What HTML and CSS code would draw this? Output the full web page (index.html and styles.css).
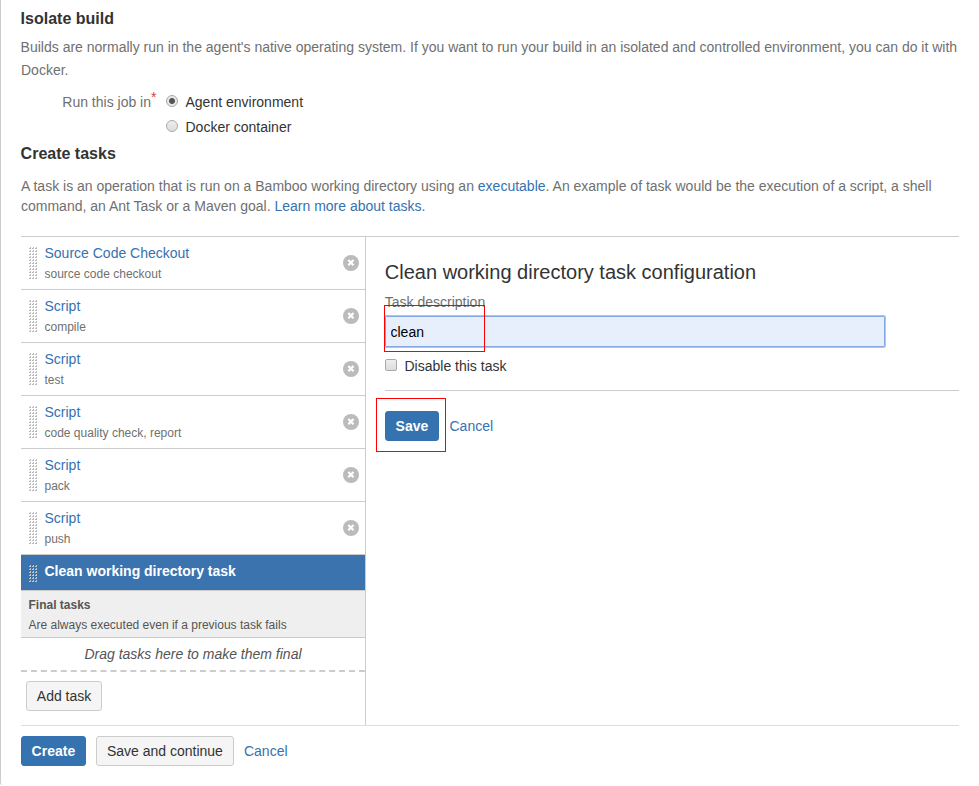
FILE: index.html
```html
<!DOCTYPE html>
<html lang="en">
<head>
<meta charset="utf-8">
<title>Create tasks</title>
<link rel="stylesheet" href="styles.css">
</head>
<body>
<svg class="defs" width="0" height="0" aria-hidden="true">
  <defs>
    <pattern id="dots" width="3" height="3" patternUnits="userSpaceOnUse">
      <path d="M1 0h1v1h-1zM0 1h2v1h-2z" fill="#bcbcbc"/>
    </pattern>
    <pattern id="dots-light" width="3" height="3" patternUnits="userSpaceOnUse">
      <path d="M1 0h1v1h-1zM0 1h2v1h-2z" fill="#c4c4c4"/>
    </pattern>
    <symbol id="remove" viewBox="0 0 16 16">
      <circle cx="8" cy="8" r="8" fill="#bbb"/>
      <path d="M5.3 5l5.2 5.2M10.5 5l-5.2 5.2" stroke="#fff" stroke-width="2.2"/>
    </symbol>
  </defs>
</svg>
<main class="page">
  <section class="isolate">
    <h3>Isolate build</h3>
    <p class="intro">Builds are normally run in the agent's native operating system. If you want to run your build in an isolated and controlled environment, you can do it with Docker.</p>
    <div class="field">
      <div class="field-label">Run this job in<span class="required">*</span></div>
      <div class="options">
        <label class="option"><span class="radio checked"></span>Agent environment</label>
        <label class="option"><span class="radio"></span>Docker container</label>
      </div>
    </div>
  </section>
  <section class="create">
    <h3>Create tasks</h3>
    <p class="intro-tasks">A task is an operation that is run on a Bamboo working directory using an <a>executable</a>. An example of task would be the execution of a script, a shell command, an Ant Task or a Maven goal. <a>Learn more about tasks.</a></p>
  </section>
  <div class="panel">
    <div class="tasks">
      <div class="task"><svg class="grip" width="8" height="32"><rect width="8" height="32" fill="url(#dots)"/></svg><div class="task-text"><a>Source Code Checkout</a><small>source code checkout</small></div><svg class="remove"><use href="#remove"/></svg></div>
      <div class="task"><svg class="grip" width="8" height="32"><rect width="8" height="32" fill="url(#dots)"/></svg><div class="task-text"><a>Script</a><small>compile</small></div><svg class="remove"><use href="#remove"/></svg></div>
      <div class="task"><svg class="grip" width="8" height="32"><rect width="8" height="32" fill="url(#dots)"/></svg><div class="task-text"><a>Script</a><small>test</small></div><svg class="remove"><use href="#remove"/></svg></div>
      <div class="task"><svg class="grip" width="8" height="32"><rect width="8" height="32" fill="url(#dots)"/></svg><div class="task-text"><a>Script</a><small>code quality check, report</small></div><svg class="remove"><use href="#remove"/></svg></div>
      <div class="task"><svg class="grip" width="8" height="32"><rect width="8" height="32" fill="url(#dots)"/></svg><div class="task-text"><a>Script</a><small>pack</small></div><svg class="remove"><use href="#remove"/></svg></div>
      <div class="task"><svg class="grip" width="8" height="32"><rect width="8" height="32" fill="url(#dots)"/></svg><div class="task-text"><a>Script</a><small>push</small></div><svg class="remove"><use href="#remove"/></svg></div>
      <div class="task active"><svg class="grip" width="8" height="17"><rect width="8" height="17" fill="url(#dots-light)"/></svg><div class="task-text">Clean working directory task</div></div>
      <div class="final"><strong>Final tasks</strong><span>Are always executed even if a previous task fails</span></div>
      <div class="drop">Drag tasks here to make them final</div>
      <svg class="dashes" width="344" height="2"><path d="M0 1H344" stroke="#ccc" stroke-width="2" stroke-dasharray="6 3.94"/></svg>
      <button class="button add">Add task</button>
    </div>
    <div class="config">
      <h2>Clean working directory task configuration</h2>
      <div class="described">
        <label class="caption" for="description">Task description</label>
        <input id="description" class="text" type="text" value="clean">
        <span class="mark mark-input"></span>
      </div>
      <label class="disable"><span class="checkbox"></span>Disable this task</label>
      <div class="config-actions">
        <span class="save"><button class="button primary">Save</button><span class="mark mark-save"></span></span>
        <a>Cancel</a>
      </div>
    </div>
  </div>
  <div class="actions">
    <button class="button primary">Create</button>
    <button class="button">Save and continue</button>
    <a>Cancel</a>
  </div>
</main>
</body>
</html>
```
FILE: styles.css
```css
* { box-sizing: border-box; }
body {
  margin: 0;
  background: #fff;
  color: #333;
  font: 14px/20px "Liberation Sans", Arial, sans-serif;
}
a { color: #3572b0; }
h2, h3, p { margin: 0; }
.defs { display: block; height: 0; }
.page {
  height: 786px;
  padding: 9px 20px 0;
  border-left: 1px solid #ccc;
  border-bottom: 1px solid transparent;
  border-bottom-left-radius: 4px;
  overflow: hidden;
}
h3 { font-size: 16px; line-height: 20px; text-indent: -0.4px; }
.intro { margin: 7px -2px 0 0; line-height: 23px; color: #707070; text-indent: -0.4px; }
.field { display: flex; margin-top: 10px; }
.field-label { width: 135px; text-align: right; color: #707070; white-space: nowrap; }
.required {
  display: inline-block;
  width: 5px;
  color: #d04437;
  line-height: 10px;
  transform: translateY(-5px);
}
.options { margin-left: 10px; }
.option { display: flex; height: 25px; }
.radio {
  width: 12px;
  height: 12px;
  margin: 3px 7.5px 0 0;
  border: 1px solid #a9a9a9;
  border-radius: 50%;
  background: linear-gradient(#eee, #dcdcdc);
}
.radio.checked { background: radial-gradient(circle, #555 0 2.5px, #e8e8e8 3.5px); }
.create { margin-top: 2px; }
.intro-tasks { margin-top: 12px; color: #707070; }
.panel {
  display: flex;
  width: 938px;
  height: 490px;
  margin-top: 20px;
  border-top: 1px solid #ccc;
  border-bottom: 1px solid #ddd;
}
.tasks { width: 345px; border-right: 1px solid #ccc; }
.task {
  display: flex;
  height: 53px;
  padding: 6px 6px 0 8px;
  border-bottom: 1px solid #ccc;
}
.grip { display: block; flex: none; margin-top: 4px; }
.task-text { flex: 1; margin-left: 7.5px; }
.task-text a, .task-text small { display: block; }
.task-text small { font-size: 12px; line-height: 20px; color: #707070; }
.remove { width: 16px; height: 16px; margin-top: 12px; }
.task-text small { padding-top: 1px; }
.task.active {
  height: 36px;
  background: #3b73af;
  color: #fff;
  font-weight: bold;
}
.final {
  height: 47px;
  padding: 4px 7.5px 0;
  border-bottom: 1px solid #ccc;
  background: #efefef;
  color: #555;
  font-size: 12px;
}
.final strong, .final span { display: block; }
.drop { height: 32px; padding-top: 6px; text-align: center; font-style: italic; color: #555; }
.dashes { display: block; }
.button {
  height: 30px;
  padding: 0 9.8px;
  border: 1px solid #ccc;
  border-radius: 3px;
  background: #f5f5f5;
  color: #333;
  font: 14px/20px "Liberation Sans", Arial, sans-serif;
}
.button.primary { padding: 0 9.6px; border-color: #3572b0; background: #3572b0; color: #fff; font-weight: bold; }
.add { display: block; margin: 9px 0 0 5px; }
.config { flex: 1; padding: 20px 0 0 19px; }
h2 { font-size: 20px; font-weight: normal; line-height: 30px; text-indent: -0.2px; }
.described { position: relative; margin-top: 5px; }
.caption { display: block; height: 24px; color: #707070; text-indent: -0.2px; }
.text {
  display: block;
  width: 500px;
  height: 31px;
  padding: 0 4.5px;
  border: 1px solid #86a9e6;
  border-radius: 1px;
  outline: 1px solid #a4c6f8;
  background: #e8effc;
  color: #000;
  font: 14px "Liberation Sans", Arial, sans-serif;
}
.mark { position: absolute; border: 1px solid #f00; pointer-events: none; }
.mark-input { left: -1px; top: 13px; width: 101px; height: 47px; }
.disable { display: flex; margin-top: 9px; }
.checkbox {
  width: 12px;
  height: 12px;
  margin: 3px 7.5px 0 0;
  border: 1px solid #a9a9a9;
  border-radius: 2px;
  background: linear-gradient(#eee, #dcdcdc);
}
.config-actions {
  display: flex;
  align-items: center;
  margin-top: 14px;
  padding-top: 20px;
  border-top: 1px solid #ccc;
}
.save { position: relative; margin-right: 10.6px; }
.save .button { display: block; }
.mark-save { left: -9px; top: -13px; width: 70px; height: 54px; }
.actions { display: flex; align-items: center; gap: 10.3px; margin-top: 10px; }
```
